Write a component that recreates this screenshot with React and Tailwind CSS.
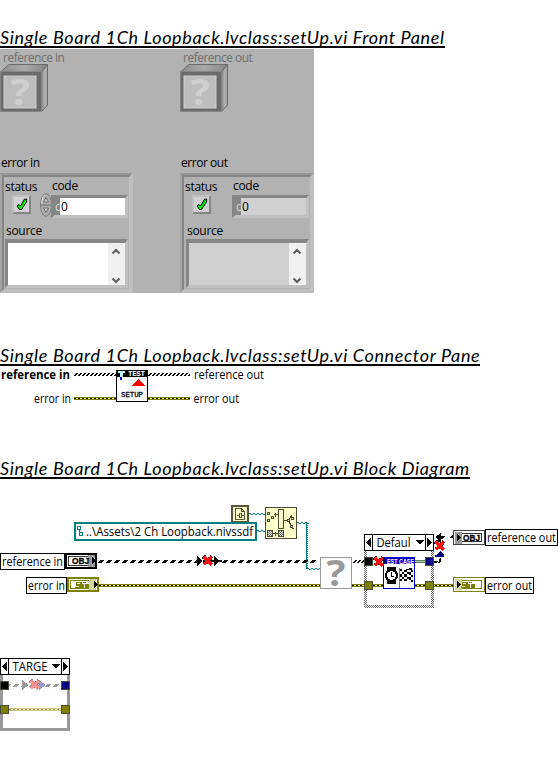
import React from "react";

const UI = '"Open Sans","Noto Sans",sans-serif';

function Heading({ children }) {
  return (
    <h2 className="h-[22px] w-max overflow-hidden whitespace-nowrap border-b-2 border-black font-['Lato',sans-serif] text-[18px] italic leading-[22px] tracking-[0.65px] text-black">
      {children}
    </h2>
  );
}

function Cube() {
  return (
    <svg width="48" height="48" viewBox="0 0 48 48" className="block overflow-visible">
      <defs>
        <linearGradient id="top" x1="0" x2="1" y1="0" y2="0">
          <stop offset="0" stopColor="#8c8c8c" />
          <stop offset="0.5" stopColor="#aaaaaa" />
          <stop offset="1" stopColor="#858585" />
        </linearGradient>
        <linearGradient id="side" x1="0" x2="1" y1="0" y2="0">
          <stop offset="0" stopColor="#868686" />
          <stop offset="0.6" stopColor="#b4b4b4" />
          <stop offset="1" stopColor="#979797" />
        </linearGradient>
      </defs>
      <path d="M0.5 8 L9 0.5 H47.5 L41.5 8 Z" fill="url(#top)" stroke="#6c6c6c" />
      <path d="M41.5 8 L47.5 0.5 V41 L41.5 47.5 Z" fill="url(#side)" stroke="#6c6c6c" />
      <rect x="0.5" y="7.5" width="41" height="40" fill="#6b6b6b" stroke="#858585" />
      <rect x="4" y="12" width="32" height="32" fill="#bdbdbd" stroke="#cdcdcd" />
      <text x="20" y="41" textAnchor="middle" fontFamily={UI} fontWeight="700" fontSize="36" textLength="19" lengthAdjust="spacingAndGlyphs" fill="#cfcfcf">?</text>
    </svg>
  );
}

function Check({ dim }) {
  return (
    <div className={"flex h-[19px] w-[19px] items-center justify-center border-2 border-b-[#858585] border-l-[#c0c0c0] border-r-[#858585] border-t-[#c0c0c0] " + (dim ? "bg-[#d0d0d0]" : "bg-[#d4d4d4]")}>
      <svg width="12" height="13" viewBox="0 0 12 13">
        <path d="M1 8 L3 6.500 L4.500 8 L8.500 1.200 L10.700 1 L10.500 4 L5.500 11.500 L3.500 11.500 Z" fill="#00f000" stroke="#000" strokeWidth="1" />
      </svg>
    </div>
  );
}

function Spinner() {
  return (
    <svg width="12" height="24" viewBox="0 0 12 24" className="block">
      <ellipse cx="6" cy="12" rx="5.500" ry="11.300" fill="#adadad" stroke="#7c7c7c" />
      <path d="M3 4 Q1.500 8 1.800 12 M3.500 3 L5 1.800" stroke="#e0e0e0" fill="none" />
      <path d="M1 12 H11" stroke="#8c8c8c" strokeWidth="2" />
      <path d="M3.500 9 L6 4.500 L8.500 9 Z M3.500 15 L6 19.500 L8.500 15 Z" fill="#d0d0d0" stroke="#6a6a6a" />
    </svg>
  );
}

const BEVEL = "border-b-[#c0c0c0] border-l-[#868686] border-r-[#c0c0c0] border-t-[#868686]";

function ErrorCluster({ title, out }) {
  return (
    <div className={out ? "w-[134px]" : "w-[133px]"}>
      <div className="h-[18px] pl-[1px] leading-[15px] tracking-[-0.45px]">{title}</div>
      <div className="h-[120px] border-2 border-b-[#bebebe] border-l-[#a4a4a4] border-r-[#bebebe] border-t-[#989898]">
        <div className={"h-[116px] border-2 pl-[1px] " + BEVEL}>
          <div className="flex h-[18px] leading-[17px]">
            <span className="w-[47px] pt-px">status</span>
            <span className={out ? "pl-px" : ""}>code</span>
          </div>
          <div className="flex h-[29px] items-start">
            <div className="pl-[7px]">
              <Check dim={out} />
            </div>
            <div className="-mt-[2px] ml-[9px] w-[12px]">{!out && <Spinner />}</div>
            <div className={"flex h-[23px] w-[77px] border-b-[3px] border-l-[4px] border-r-[3px] border-t-[3px] " + BEVEL + (out ? "" : " -ml-px")}>
              <span className="w-[5px] bg-[#868686] text-[12px] leading-[17px] text-[#d6d6d6]">d</span>
              <span className={"flex-1 pl-px leading-[17px] " + (out ? "bg-[#d0d0d0]" : "bg-white")}>0</span>
            </div>
          </div>
          <div className={"h-[15px] leading-[13px] " + (out ? "pl-[2px]" : "pl-[1px]")}>source</div>
          <div className={"flex h-[49px] w-[123px] justify-end border-b-[3px] border-l-[3px] border-r-[3px] border-t-[4px] " + BEVEL + (out ? " ml-[1px] bg-[#d0d0d0]" : " bg-white")}>
            <svg width="17" height="42" viewBox="0 0 17 42" className="block bg-[#f0f0f0]">
              <path d="M4.500 10.500 L8 7 L11.500 10.500 M4.500 35.500 L8 39 L11.500 35.500" fill="none" stroke="#606060" strokeWidth="2.200" />
            </svg>
          </div>
        </div>
      </div>
    </div>
  );
}

function FrontPanel() {
  return (
    <div className="h-[244px] w-[314px] bg-[#b2b2b2] font-['Open_Sans'] text-[12px] tracking-[-0.3px] text-black">
      <div className="flex h-[106px]">
        <div className="w-[180px]">
          <div className="h-[15px] pl-[3px] leading-[18px] tracking-[-0.5px] text-[#707070]">reference in</div>
          <Cube />
        </div>
        <div>
          <div className="h-[15px] pl-[3px] leading-[18px] tracking-[-0.5px] text-[#707070]">reference out</div>
          <Cube />
        </div>
      </div>
      <div className="flex justify-between">
        <ErrorCluster title="error in" />
        <ErrorCluster title="error out" out />
      </div>
    </div>
  );
}

function T({ x, y, w, size = 12, bold, fill = "#000", children }) {
  return (
    <text x={x} y={y} textLength={w} lengthAdjust="spacingAndGlyphs" fontFamily={UI} fontSize={size} fontWeight={bold ? 700 : 400} fill={fill}>
      {children}
    </text>
  );
}

function Defs() {
  return (
    <defs>
      <pattern id="check" width="2" height="2" patternUnits="userSpaceOnUse">
        <rect width="2" height="2" fill="#fff" />
        <rect width="1" height="1" fill="#666" />
        <rect x="1" y="1" width="1" height="1" fill="#666" />
      </pattern>
    </defs>
  );
}

function ErrWire({ x1, x2, y }) {
  return (
    <g>
      <path d={`M${x1} ${y + 1.5} H${x2}`} stroke="#7c7c00" strokeWidth="3" />
      <path d={`M${x1} ${y + 1.5} H${x2}`} stroke="#ffff30" strokeWidth="1" />
      <path d={`M${x1} ${y + 1.5} H${x2}`} stroke="#000" strokeWidth="1" strokeDasharray="2 2" />
    </g>
  );
}

function DiagWire({ x1, x2, y }) {
  return (
    <g stroke="#000">
      <path d={`M${x1 + 2} ${y + 0.5} H${x2}`} strokeDasharray="2 2" />
      <path d={`M${x1 + 1} ${y + 1.5} H${x2}`} strokeDasharray="2 2" />
      <path d={`M${x1} ${y + 2.5} H${x2}`} strokeDasharray="2 2" />
    </g>
  );
}

function ObjWire({ x1, x2, y, fill = "#000" }) {
  const parts = [];
  for (let x = x1; x < x2 - 3; x += 8) {
    parts.push(`M${x + 2} ${y}H${x + 6}V${y + 1}H${x + 5}V${y + 2}H${x + 4}V${y + 3}H${x}V${y + 2}H${x + 1}V${y + 1}H${x + 2}Z`);
  }
  return <path d={parts.join("")} fill={fill} />;
}

function RedX({ x, y, fill = "#ff1414", edge = "#400000" }) {
  return (
    <g transform={`translate(${x} ${y})`}>
      <path d="M0.500 0.500 L9 9 M9 0.500 L0.500 9" stroke={edge} strokeWidth="4.400" strokeDasharray="1 1.400" />
      <path d="M0.800 0.800 L8.700 8.700 M8.700 0.800 L0.800 8.700" stroke={fill} strokeWidth="2.900" />
    </g>
  );
}

function ConnectorPane() {
  return (
    <svg width="558" height="40" viewBox="0 366 558 40" className="block" shapeRendering="crispEdges">
      <T x={1} y={379} w={69} bold>reference in</T>
      <T x={34} y={403} w={37}>error in</T>
      <T x={194} y={379} w={70}>reference out</T>
      <T x={193.5} y={403} w={45.5}>error out</T>
      <DiagWire x1={74} x2={116} y={373} />
      <DiagWire x1={148} x2={190} y={373} />
      <ErrWire x1={74} x2={116} y={397} />
      <ErrWire x1={148} x2={190} y={397} />
      <rect x="116.500" y="370.500" width="31" height="31" fill="#fff" stroke="#000" />
      <rect x="117" y="371" width="30" height="6" />
      <path d="M118 371 H125 V373 H123 V377 H120 V373 H118 Z" fill="#b8f4f4" />
      <rect x="120" y="377" width="2" height="3" fill="#0000d0" />
      <text x="128" y="376.300" fontFamily="Liberation Mono" fontWeight="700" fontSize="7.500" textLength="17" fill="#fff">TEST</text>
      <path d="M138.500 379 L145 386 H132 Z" fill="#f00" />
      <text x="121" y="397" fontFamily="Liberation Mono" fontSize="7.500" textLength="22" lengthAdjust="spacingAndGlyphs" stroke="#000" strokeWidth="0.300">SETUP</text>
    </svg>
  );
}

function LabelBox({ x, y, w, tw, children }) {
  return (
    <g>
      <rect x={x + 0.5} y={y + 0.5} width={w - 1} height={16} fill="#fff" stroke="#000" />
      <T x={x + 2} y={y + 12.500} w={tw}>{children}</T>
    </g>
  );
}

function ObjTerminal({ x, y, out }) {
  return (
    <g transform={`translate(${x} ${y})`}>
      <rect x={out ? 0.5 : 1} y={out ? 0.5 : 1} width={out ? 31 : 30} height="14" fill="#fff" stroke={out ? "#444" : "#000"} strokeWidth={out ? 1 : 2} />
      <rect x="3.500" y="3.500" width="25" height={out ? 8 : 9} fill="#fff" stroke="#333" />
      <rect x={out ? 2 : 23} y="2" width="7" height="12" fill="#999" />
      <text x={out ? 10 : 7} y="11.300" fontFamily="Liberation Sans" fontWeight="700" fontSize="9" textLength={out ? 17 : 17} lengthAdjust="spacingAndGlyphs" stroke="#000" strokeWidth="0.300">OBJ</text>
      <path d={out ? "M4 4 L8 7.500 L4 11 Z" : "M27 4 L31 7.500 L27 11 Z"} />
    </g>
  );
}

function ErrTerminal({ x, y, out }) {
  return (
    <g transform={`translate(${x} ${y})`}>
      <rect x={out ? 0.5 : 1} y={out ? 0.5 : 1} width={out ? 31 : 30} height={out ? 14 : 13} fill="#fff" stroke="#808000" strokeWidth={out ? 1 : 2} />
      <rect x="3.500" y="3.500" width="25" height="8" fill="#fff" stroke="#808000" />
      <rect x={out ? 2 : 22} y="2" width="7" height="11" fill="#d4d49c" />
      <g fill="none" stroke="#808000">
        <path d="M9 5.500 H13 M14.500 5 V7 M9 8.500 H12 V10.500 H8 M16 5.500 H19" />
        <rect x="9.500" y="5.500" width="4" height="2" />
        <rect x="14" y="8" width="2" height="2" strokeWidth="2" />
        <rect x="19" y="8" width="2" height="2" strokeWidth="2" />
      </g>
      <path d={out ? "M4 4 L8 7.500 L4 11 Z" : "M27 4 L31 7.500 L27 11 Z"} />
    </g>
  );
}

function Tunnel({ x, y, fill }) {
  return <rect x={x + 0.5} y={y + 0.5} width="8" height="8" fill={fill} stroke="#4c4c3c" />;
}

function Selector({ x, y, tw, children }) {
  return (
    <g transform={`translate(${x} ${y})`}>
      <rect x="0.500" y="0.500" width="69" height="16" fill="#fff" stroke="#000" />
      <path d="M8.500 0 V17 M61.500 0 V17" stroke="#000" />
      <path d="M7 3.500 V13.500 L2 8.500 Z M63 3.500 V13.500 L68 8.500 Z M51.500 6 H60 L55.800 10.800 Z" />
      <T x={12.500} y={13} w={tw}>{children}</T>
    </g>
  );
}

function BlockDiagram() {
  const wavy = (x1, x2, y) => {
    let d = "";
    for (let x = x1; x < x2; x += 4) d += `M${x} ${y + 0.5}h2m0 1h2`;
    return d;
  };
  return (
    <svg width="558" height="303" viewBox="0 479 558 303" className="block" shapeRendering="crispEdges">
      <Defs />
      {/* path wires */}
      <g fill="none" stroke="#008080">
        <path d={wavy(249, 265, 513)} />
        <path d={wavy(257, 265, 530)} />
        <path d={wavy(297, 307, 522)} />
        <path d="M306.500 523 V569" />
        <path d="M307.500 523 V569" strokeDasharray="1 1" />
        <path d={wavy(307, 320, 568)} />
      </g>
      {/* current file path */}
      <rect x="232" y="506" width="16" height="16" fill="#ffffcc" stroke="#59543c" strokeWidth="2" />
      <path d="M235.500 508.500 H241.500 L244.500 511.500 V519.500 H235.500 Z M241.500 508.500 V511.500 H244.500 M237 515.500 H239 M239.500 513.500 H241.500 V517.500 H239.500 Z M242 515.500 H244" fill="none" stroke="#59543c" />
      {/* path constant */}
      <rect x="75" y="523" width="181" height="17" fill="#fff" stroke="#008080" strokeWidth="2" />
      <path d="M77.500 526.500 H80.500 V529.500 H77.500 Z M79.500 530 V533.500 H80 M79.500 532.500 H82.500 V535.500 H79.500 Z" fill="none" stroke="#008080" />
      <T x={86} y={536} w={167}>..\Assets\2 Ch Loopback.nivssdf</T>
      {/* build path */}
      <g fill="none" stroke="#4c4c34">
        <rect x="265.500" y="507.500" width="31" height="31" fill="#ffffcc" />
        <path d="M278.500 509.500 H283.500 V528.500 H278.500 Z" />
        <path d="M267.500 512.500 H269.500 V514.500 H267.500 Z M271.500 516.500 H273.500 V518.500 H271.500 Z M267.500 519.500 H269.500 V521.500 H267.500 Z M287.500 519.500 H289.500 V521.500 H287.500 Z M291.500 517.500 H293.500 V519.500 H291.500 Z M290.500 525.500 H292.500 V527.500 H290.500 Z M292 528.500 H294" />
        <path d="M273.500 514.500 H278 M275.500 512.500 V516.500 M284 520.500 H287 M273 533.500 H278 M275.500 531.500 V535.500" />
        <path d="M292 515.500 L289 519 M289 522 L291 525" />
        <rect x="267.500" y="530.500" width="5" height="6" fill="url(#check)" />
        <rect x="278.500" y="530.500" width="5" height="6" fill="url(#check)" />
      </g>
      {/* object and error wires */}
      <ObjWire x1={98} x2={198} y={560} />
      <ObjWire x1={222} x2={320} y={560} />
      <path d="M197 556 L203 561 L197 566 Z M214 556 L220 561 L214 566 Z M203 560 H222 V562 H203 Z" />
      <RedX x={203} y={556} />
      <ErrWire x1={99} x2={320} y={584} />
      <DiagWire x1={353} x2={365} y={560} />
      <ErrWire x1={352} x2={365} y={584} />
      <LabelBox x={0} y={553} w={65} tw={61}>reference in</LabelBox>
      <ObjTerminal x={65} y={553} />
      <LabelBox x={26} y={577} w={41} tw={37}>error in</LabelBox>
      <ErrTerminal x={67} y={577} />
      {/* missing subVI */}
      <rect x="320.500" y="557.500" width="31" height="31" fill="#fff" stroke="#999" />
      <text x="336" y="585.500" textAnchor="middle" fontFamily={UI} fontWeight="700" fontSize="35" textLength="19" lengthAdjust="spacingAndGlyphs" fill="#999">?</text>
      {/* case structure */}
      <path d="M365.500 551 V606.500 H432.500 V551" fill="none" stroke="url(#check)" strokeWidth="3" />
      <Selector x={364} y={534} tw={34}>Defaul</Selector>
      <ErrWire x1={373} x2={383} y={584} />
      <ErrWire x1={415} x2={453} y={584} />
      <path d="M415 561.500 H425" stroke="#5c8464" strokeWidth="3" />
      <path d="M415 561.500 H425" stroke="#a8c8a8" />
      <Tunnel x={364} y={557} fill="#000" />
      <Tunnel x={364} y={581} fill="#808000" />
      <Tunnel x={425} y={557} fill="#000080" />
      <Tunnel x={425} y={581} fill="#808000" />
      <rect x="383.500" y="557.500" width="31" height="31" fill="#fff" stroke="#0000c8" />
      <rect x="384" y="558" width="30" height="6" fill="#0000c8" />
      <rect x="384" y="558" width="4" height="6" fill="#000080" />
      <text x="387" y="563.500" fontFamily="Liberation Sans" fontWeight="700" fontSize="7.500" textLength="27" lengthAdjust="spacingAndGlyphs" fill="#fff">EST CASE</text>
      <RedX x={374} y={557} />
      <path d="M387 567 H396 V571 H387 Z M387 580 H396 V584 H387 Z" />
      <circle cx="391.500" cy="575.500" r="5.500" fill="#fff" stroke="#000" strokeWidth="2" />
      <path d="M391.500 572 V576.500 H394 M397.500 573 V578" fill="none" stroke="#000" />
      <path d="M399.500 568 V588" stroke="#777" />
      <path d="M400 569h2v2h-2zM404 570h3v2h-3zM409 568h3v2h-3zM402 572h2v2h-2zM407 572h2v2h-2zM411 570h2v2h-2zM400 574h2v3h-2zM404 574h3v3h-3zM409 572h2v3h-2zM402 577h2v2h-2zM407 577h2v2h-2zM411 575h2v2h-2zM400 579h2v2h-2zM404 579h3v2h-3zM409 577h2v3h-2zM411 580h2v2h-2zM406 569h3v1h-3z" />
      {/* broken object wire */}
      <path d="M434 561 H438 L436 563 H434 Z M440 558 H441 V562 L438 563 Z M435 537 L441 533 V536 H445 L443 539 H441 V541 Z M450 537 L453 535 V538 H449 Z M438 539 H441 V542 H438 Z" />
      <path d="M435 557 V555 H436 L440 551 L444 555 V557 Z" fill="#000080" />
      <RedX x={435} y={541} />
      <ObjTerminal x={453} y={530} out />
      <LabelBox x={485} y={529} w={73} tw={69}>reference out</LabelBox>
      <ErrTerminal x={453} y={577} out />
      <LabelBox x={485} y={577} w={49} tw={45}>error out</LabelBox>
      {/* second case */}
      <path d="M1.500 675 V729.500 H68.500 V675" fill="none" stroke="#999" strokeWidth="3" />
      <Selector x={0} y={658} tw={35}>TARGE</Selector>
      <ObjWire x1={5} x2={62} y={684} fill="#999" />
      <path d="M22 680 L29 685 L22 690 Z" fill="#999" />
      <path d="M39 680 L46 685 L39 690 Z" fill="#9999cc" />
      <RedX x={30} y={680} fill="#ff9090" edge="#b08080" />
      <path d="M9 709.500 H61" stroke="#cccc88" strokeWidth="3" />
      <path d="M9 709.500 H61" stroke="#ffffb0" />
      <path d="M9 709.500 H61" stroke="#8c8c60" strokeDasharray="2 2" />
      <Tunnel x={0} y={681} fill="#000" />
      <Tunnel x={61} y={681} fill="#000080" />
      <Tunnel x={0} y={705} fill="#808000" />
      <Tunnel x={61} y={705} fill="#808000" />
    </svg>
  );
}

export default function App() {
  return (
    <main className="h-[782px] w-[558px] overflow-hidden bg-white pt-[26px]">
      <Heading>Single Board 1Ch Loopback.lvclass:setUp.vi Front Panel</Heading>
      <div className="pt-px">
        <FrontPanel />
      </div>
      <div className="pt-[51px]">
        <Heading>Single Board 1Ch Loopback.lvclass:setUp.vi Connector Pane</Heading>
        <ConnectorPane />
      </div>
      <div className="pt-[51px]">
        <Heading>Single Board 1Ch Loopback.lvclass:setUp.vi Block Diagram</Heading>
        <BlockDiagram />
      </div>
    </main>
  );
}
